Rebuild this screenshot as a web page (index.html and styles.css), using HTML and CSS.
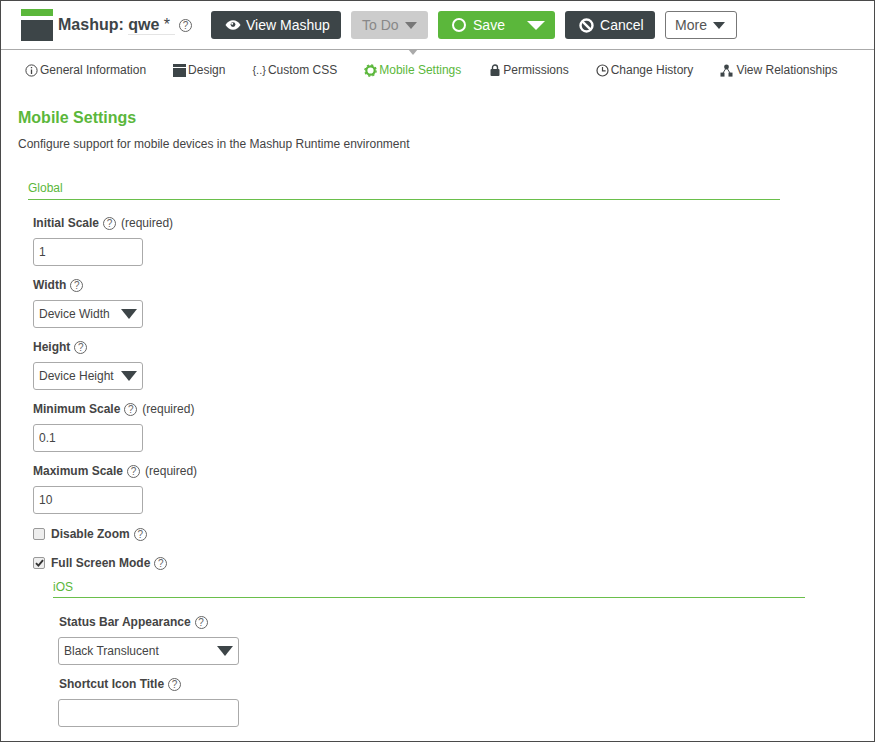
FILE: index.html
```html
<!DOCTYPE html>
<html lang="en">
<head>
    <meta charset="UTF-8">
    <title>Mashup: qwe</title>
    <link rel="stylesheet" href="styles.css">
</head>
<body>
    <div class="frame">
        <!-- Top bar -->
        <header class="topbar">
            <div class="logo"><span class="logo-top"></span><span class="logo-bottom"></span></div>
            <h1 class="mashup-title">Mashup: <span class="mashup-name">qwe <span class="star">*</span></span></h1>
            <span class="help help-title">?</span>
            <div class="actions">
                <button class="btn btn-dark btn-view">
                    <svg width="16" height="10" viewBox="0 0 16 10"><path d="M0.5 5C2.5 1.8 5 0.3 8 0.3S13.5 1.8 15.5 5C13.5 8.2 11 9.7 8 9.7S2.5 8.2 0.5 5Z" fill="#fff"/><circle cx="8" cy="4.6" r="2.4" fill="#3d4548"/><circle cx="7.2" cy="3.8" r="1" fill="#fff"/></svg>
                    View Mashup
                </button>
                <button class="btn btn-disabled">To Do <span class="caret caret-gray"></span></button>
                <button class="btn btn-green btn-save">
                    <span class="save-main"><span class="ring"></span>Save</span>
                    <span class="caret caret-white"></span>
                </button>
                <button class="btn btn-dark btn-cancel">
                    <svg width="15" height="15" viewBox="0 0 15 15"><circle cx="7.5" cy="7.5" r="6" fill="none" stroke="#fff" stroke-width="2.4"/><path d="M3.3 3.3L11.7 11.7" stroke="#fff" stroke-width="2.4"/></svg>
                    Cancel
                </button>
                <button class="btn btn-outline">More <span class="caret caret-dark"></span></button>
            </div>
        </header>

        <!-- Tabs -->
        <nav class="tabs">
            <a class="tab">
                <svg width="13" height="13" viewBox="0 0 13 13"><circle cx="6.5" cy="6.5" r="5.6" fill="none" stroke="#444" stroke-width="1"/><path d="M6.5 5.6V10M6.5 3V4.3" stroke="#444" stroke-width="1.3"/></svg>
                General Information
            </a>
            <a class="tab">
                <svg width="13" height="13" viewBox="0 0 13 13"><rect width="13" height="3" fill="#3d4548"/><rect y="4" width="13" height="9" fill="#3d4548"/></svg>
                Design
            </a>
            <a class="tab"><span class="css-icon">{..}</span>Custom CSS</a>
            <a class="tab tab-active">
                <svg width="13" height="13" viewBox="0 0 13 13"><circle cx="6.5" cy="6.5" r="4.2" fill="none" stroke="#5bb73b" stroke-width="2.2"/><circle cx="6.5" cy="6.5" r="5.6" fill="none" stroke="#5bb73b" stroke-width="1.4" stroke-dasharray="2.2 2.2"/></svg>
                Mobile Settings
            </a>
            <a class="tab tab-perm">
                <svg width="10" height="12" viewBox="0 0 10 12"><rect x="0.5" y="5" width="9" height="7" rx="1" fill="#3d4548"/><path d="M2.5 5.5V3.5a2.5 2.5 0 0 1 5 0V5.5" fill="none" stroke="#3d4548" stroke-width="1.4"/></svg>
                Permissions
            </a>
            <a class="tab">
                <svg width="13" height="13" viewBox="0 0 13 13"><circle cx="6.5" cy="6.5" r="5.5" fill="none" stroke="#444" stroke-width="1.2"/><path d="M6.5 3V6.8H9.6" fill="none" stroke="#444" stroke-width="1.2"/></svg>
                Change History
            </a>
            <a class="tab tab-rel">
                <svg width="13" height="13" viewBox="0 0 13 13"><circle cx="6.5" cy="3" r="2.4" fill="#3d4548"/><rect x="0.5" y="8.6" width="4" height="4" fill="#3d4548"/><rect x="8.5" y="8.6" width="4" height="4" fill="#3d4548"/><path d="M5.5 5L3 9M7.5 5L10 9" stroke="#3d4548" stroke-width="1"/></svg>
                View Relationships
            </a>
        </nav>

        <!-- Content -->
        <main class="content">
            <h2 class="page-title">Mobile Settings</h2>
            <p class="page-desc">Configure support for mobile devices in the Mashup Runtime environment</p>

            <section class="group group-global">
                <h3 class="group-title">Global</h3>
                <div class="group-body">
                    <div class="field">
                        <label class="field-label">Initial Scale <span class="help">?</span> <span class="required">(required)</span></label>
                        <input class="input" type="text" value="1">
                    </div>
                    <div class="field">
                        <label class="field-label">Width <span class="help">?</span></label>
                        <div class="select"><span>Device Width</span><span class="caret caret-select"></span></div>
                    </div>
                    <div class="field">
                        <label class="field-label">Height <span class="help">?</span></label>
                        <div class="select"><span>Device Height</span><span class="caret caret-select"></span></div>
                    </div>
                    <div class="field">
                        <label class="field-label">Minimum Scale <span class="help">?</span> <span class="required">(required)</span></label>
                        <input class="input" type="text" value="0.1">
                    </div>
                    <div class="field">
                        <label class="field-label">Maximum Scale <span class="help">?</span> <span class="required">(required)</span></label>
                        <input class="input" type="text" value="10">
                    </div>
                    <div class="check-row check-first">
                        <span class="check"></span>
                        <label class="field-label">Disable Zoom <span class="help">?</span></label>
                    </div>
                    <div class="check-row">
                        <span class="check check-on">
                            <svg width="9" height="8" viewBox="0 0 9 8"><path d="M1 4.2L3.4 6.6L8 1.2" fill="none" stroke="#333" stroke-width="1.9"/></svg>
                        </span>
                        <label class="field-label">Full Screen Mode <span class="help">?</span></label>
                    </div>
                </div>
            </section>

            <section class="group group-ios">
                <h3 class="group-title">iOS</h3>
                <div class="group-body">
                    <div class="field">
                        <label class="field-label">Status Bar Appearance <span class="help">?</span></label>
                        <div class="select select-wide"><span>Black Translucent</span><span class="caret caret-select"></span></div>
                    </div>
                    <div class="field">
                        <label class="field-label">Shortcut Icon Title <span class="help">?</span></label>
                        <input class="input input-wide" type="text">
                    </div>
                </div>
            </section>
        </main>
    </div>
</body>
</html>
```

FILE: styles.css
```css
/* Base */
html, body {
    margin: 0;
    padding: 0;
    background-color: white;
}

body {
    font-family: "Liberation Sans", Arial, sans-serif;
    font-size: 12px;
    color: #444;
}

.frame {
    box-sizing: border-box;
    width: 875px;
    height: 742px;
    border: 1px solid #4a4a4a;
    overflow: hidden;
}

/* Top bar */
.topbar {
    display: flex;
    align-items: center;
    height: 48px;
    padding-left: 20px;
    border-bottom: 1px solid #aaa;
}

.logo {
    display: flex;
    flex-direction: column;
    width: 32px;
    height: 32px;
    margin-right: 5px;
}

.logo-top {
    height: 7px;
    background-color: #5bb73b;
}

.logo-bottom {
    height: 21px;
    margin-top: 4px;
    background-color: #3d4548;
}

.mashup-title {
    margin: 0 4px 0 0;
    font-size: 16px;
    font-weight: bold;
    color: #3d4548;
}

.mashup-name {
    display: inline-block;
    padding-right: 5px;
    border-bottom: 1px solid #e4e4e4;
    line-height: 18px;
}

.star {
    font-weight: normal;
}

.actions {
    display: flex;
    gap: 10px;
    margin-left: 19px;
}

/* Buttons */
.btn {
    box-sizing: border-box;
    display: flex;
    align-items: center;
    height: 28px;
    padding: 0;
    border: none;
    border-radius: 3px;
    font-family: inherit;
    font-size: 14px;
}

.btn-dark {
    background-color: #3d4548;
    color: white;
}

.btn-view {
    width: 130px;
    gap: 5px;
    padding-left: 14px;
}

.btn-disabled {
    width: 77px;
    gap: 6px;
    padding-left: 11px;
    background-color: #ccc;
    color: #888;
}

.btn-green {
    background-color: #5bb73b;
    color: white;
}

.btn-save {
    width: 117px;
    padding: 0 10px 0 14px;
    justify-content: space-between;
}

.save-main {
    display: flex;
    align-items: center;
    gap: 7px;
}

.ring {
    box-sizing: border-box;
    width: 14px;
    height: 14px;
    border: 2px solid white;
    border-radius: 50%;
}

.btn-cancel {
    width: 90px;
    gap: 6px;
    padding-left: 14px;
}

.btn-outline {
    width: 72px;
    gap: 6px;
    padding-left: 9px;
    background-color: white;
    border: 1px solid #777;
    color: #555;
}

/* Triangles */
.caret {
    display: inline-block;
    width: 0;
    height: 0;
    border-style: solid;
    border-color: transparent;
    border-bottom-width: 0;
}

.caret-gray {
    border-width: 7px 6px 0;
    border-top-color: #777;
}

.caret-white {
    border-width: 9px 9px 0;
    border-top-color: white;
}

.caret-dark {
    border-width: 7px 6px 0;
    border-top-color: #3d4548;
}

.caret-select {
    border-width: 10px 8px 0;
    border-top-color: #3d4548;
}

/* Help bubble */
.help {
    box-sizing: border-box;
    flex: none;
    display: block;
    width: 13px;
    height: 13px;
    border: 1px solid #666;
    border-radius: 50%;
    font-size: 10px;
    font-weight: normal;
    line-height: 11px;
    text-align: center;
    color: #666;
}

/* Tabs */
.tabs {
    display: flex;
    align-items: center;
    gap: 27px;
    height: 40px;
    padding-left: 24px;
}

.tab {
    position: relative;
    display: flex;
    align-items: center;
    gap: 2px;
    color: #444;
    white-space: nowrap;
}

.tab-active {
    color: #5bb73b;
}

/* Marker under the bar pointing at the current tab */
.tab-active::before {
    content: "";
    position: absolute;
    top: -14px;
    left: 44px;
    border-style: solid;
    border-width: 6px 5px 0;
    border-color: #aaa transparent transparent;
}

.tab-perm {
    margin-left: 2px;
    gap: 3px;
}

.tab-rel {
    gap: 3px;
}

.css-icon {
    font-size: 11px;
}

/* Page content */
.content {
    padding: 0 0 0 17px;
}

.page-title {
    margin: 19px 0 0;
    font-size: 16px;
    line-height: 18px;
    font-weight: bold;
    color: #5bb73b;
}

.page-desc {
    margin: 9px 0 0;
    line-height: 16px;
    color: #444;
}

/* Groups */
.group-title {
    margin: 0;
    padding-bottom: 4px;
    border-bottom: 1px solid #6abf4b;
    font-size: 12px;
    font-weight: normal;
    line-height: 14px;
    color: #5bb73b;
}

.group-global {
    width: 752px;
    margin: 29px 0 0 10px;
}

.group-global .group-body {
    padding: 15px 0 0 5px;
}

.group-ios {
    width: 752px;
    margin: -4px 0 0 35px;
}

.group-ios .group-title {
    padding-bottom: 3px;
}

.group-ios .group-body {
    padding: 16px 0 0 6px;
}

/* Fields */
.field {
    height: 62px;
}

.field-label {
    display: flex;
    align-items: center;
    gap: 4px;
    height: 16px;
    font-weight: bold;
    line-height: 16px;
    color: #444;
}

.required {
    margin-left: 1px;
    font-weight: normal;
}

.input,
.select {
    box-sizing: border-box;
    display: flex;
    align-items: center;
    justify-content: space-between;
    width: 110px;
    height: 28px;
    margin-top: 7px;
    padding: 0 5px;
    background-color: white;
    border: 1px solid #aaa;
    border-radius: 3px;
    font-family: inherit;
    font-size: 12px;
    color: #444;
}

.select {
    white-space: nowrap;
}

.input-wide,
.select-wide {
    width: 181px;
    margin-left: -1px;
}

/* Checkboxes */
.check-row {
    display: flex;
    align-items: center;
    gap: 6px;
    height: 16px;
    margin-bottom: 13px;
}

.check-first {
    margin-top: 1px;
}

.check {
    box-sizing: border-box;
    display: flex;
    align-items: center;
    justify-content: center;
    width: 12px;
    height: 12px;
    background-color: #eee;
    border: 1px solid #999;
    border-radius: 2px;
}
```
